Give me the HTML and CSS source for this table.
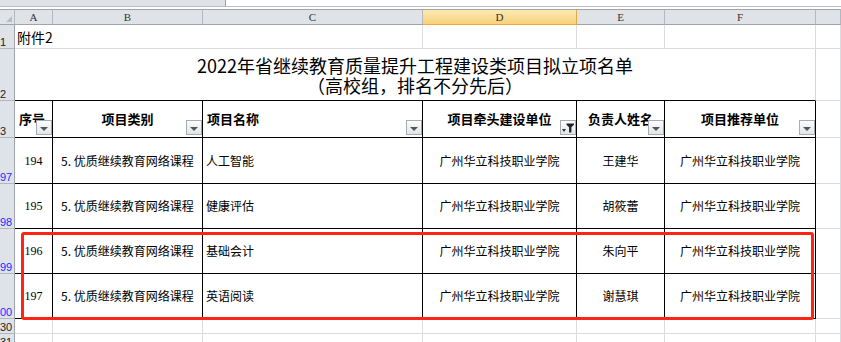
FILE: index.html
```html
<!DOCTYPE html>
<html lang="zh">
<head>
<meta charset="utf-8">
<title>2022年省继续教育质量提升工程建设类项目拟立项名单</title>
<link rel="stylesheet" href="styles.css">
</head>
<body>
<div class="topbar"><div class="namebox"></div><div class="formula"></div></div>
<div class="sheet">
  <div class="grid">
    <!-- column headers -->
    <div class="ch corner"><span class="corner-tri"></span></div>
    <div class="ch">A</div>
    <div class="ch">B</div>
    <div class="ch">C</div>
    <div class="ch active">D</div>
    <div class="ch">E</div>
    <div class="ch">F</div>
    <div class="ch"></div>

    <!-- row 1 -->
    <div class="rh">1</div>
    <div class="c note">附件2</div>
    <div class="c"></div>
    <div class="c"></div>
    <div class="c"></div>
    <div class="c"></div>
    <div class="c"></div>
    <div class="c"></div>

    <!-- row 2 -->
    <div class="rh">2</div>
    <div class="c title"><span class="tl">2022年省继续教育质量提升工程建设类项目拟立项名单</span><span class="tl">（高校组，排名不分先后）</span></div>
    <div class="c"></div>

    <!-- row 3 header -->
    <div class="rh">3</div>
    <div class="t th left">序号<span class="dd"><span class="tri"></span></span></div>
    <div class="t th">项目类别<span class="dd"><span class="tri"></span></span></div>
    <div class="t th left">项目名称<span class="dd"><span class="tri"></span></span></div>
    <div class="t th">项目牵头建设单位<span class="dd"><svg class="filter" width="14" height="13" viewBox="0 0 14 13"><path d="M1 8h4l-2 3z" fill="#333"/><path d="M5.5 2.5h7.5v1.2l-2.6 2.6v5.2h-2.3v-5.2l-2.6-2.6z" fill="#222"/></svg></span></div>
    <div class="t th">负责人姓名<span class="dd"><span class="tri"></span></span></div>
    <div class="t th">项目推荐单位<span class="dd"><span class="tri"></span></span></div>
    <div class="c"></div>

    <!-- data rows -->
    <div class="rh blue">97</div>
    <div class="t num">194</div>
    <div class="t cat">5. 优质继续教育网络课程</div>
    <div class="t name">人工智能</div>
    <div class="t ctr">广州华立科技职业学院</div>
    <div class="t ctr">王建华</div>
    <div class="t ctr">广州华立科技职业学院</div>
    <div class="c"></div>

    <div class="rh blue">98</div>
    <div class="t num">195</div>
    <div class="t cat">5. 优质继续教育网络课程</div>
    <div class="t name">健康评估</div>
    <div class="t ctr">广州华立科技职业学院</div>
    <div class="t ctr">胡筱蕾</div>
    <div class="t ctr">广州华立科技职业学院</div>
    <div class="c"></div>

    <div class="rh blue">99</div>
    <div class="t num">196</div>
    <div class="t cat">5. 优质继续教育网络课程</div>
    <div class="t name">基础会计</div>
    <div class="t ctr">广州华立科技职业学院</div>
    <div class="t ctr">朱向平</div>
    <div class="t ctr">广州华立科技职业学院</div>
    <div class="c"></div>

    <div class="rh blue">00</div>
    <div class="t num">197</div>
    <div class="t cat">5. 优质继续教育网络课程</div>
    <div class="t name">英语阅读</div>
    <div class="t ctr">广州华立科技职业学院</div>
    <div class="t ctr">谢慧琪</div>
    <div class="t ctr">广州华立科技职业学院</div>
    <div class="c"></div>

    <!-- empty rows -->
    <div class="rh">30</div>
    <div class="c"></div><div class="c"></div><div class="c"></div><div class="c"></div><div class="c"></div><div class="c"></div><div class="c"></div>
    <div class="rh">31</div>
    <div class="c"></div><div class="c"></div><div class="c"></div><div class="c"></div><div class="c"></div><div class="c"></div><div class="c"></div>
  </div>
  <div class="highlight"></div>
</div>
</body>
</html>
```

FILE: styles.css
```css
* { box-sizing: border-box; }
html, body {
  margin: 0;
  padding: 0;
  width: 841px;
  height: 342px;
  overflow: hidden;
  background: #ffffff;
  font-family: "Noto Sans CJK SC", "Noto Sans", sans-serif;
  color: #000;
}

.topbar {
  display: flex;
  height: 9px;
}
.namebox {
  width: 226px;
  height: 7px;
  background: #dfe2e7;
  border-right: 1px solid #9aa0a7;
  border-bottom: 1px solid #b9bec4;
}
.formula {
  flex: 1;
  height: 7px;
  background: #fff;
  border-bottom: 1px solid #b9bec4;
}

.sheet {
  position: relative;
}
.grid {
  display: grid;
  grid-template-columns: 15px 38px 150px 220px 154px 88px 151px 25px;
  grid-template-rows: 16px 24px 52px 37px 46px 45px 45px 45px 15px 15px;
}

.grid > div {
  border-right: 1px solid #dadcdd;
  border-bottom: 1px solid #dadcdd;
  font-size: 12px;
  line-height: 14px;
  white-space: nowrap;
  overflow: hidden;
}

/* column headers */
.grid > .ch {
  background: #dfe3e8;
  border-top: 1px solid #9ea4ab;
  border-right: 1px solid #b3b8be;
  border-bottom: 1px solid #9ea4ab;
  font-family: "Liberation Serif", serif;
  font-size: 11px;
  color: #333;
  display: flex;
  align-items: center;
  justify-content: center;
}
.grid > .ch.active {
  background: linear-gradient(#fbe9b0, #f8d27d);
  border-right-color: #e6a93e;
  border-bottom: 1px solid #f0a830;
}
.corner { position: relative; }
.corner-tri {
  position: absolute;
  right: 2px;
  bottom: 2px;
  width: 0;
  height: 0;
  border-left: 6px solid transparent;
  border-bottom: 6px solid #b7bcc2;
}

/* row headers */
.grid > .rh {
  background: #dfe3e8;
  border-right: 1px solid #9ea4ab;
  border-bottom: 1px solid #b3b8be;
  font-family: "Liberation Sans", sans-serif;
  font-size: 11px;
  line-height: 12px;
  color: #222;
  display: flex;
  align-items: flex-end;
}
.grid > .rh.blue { color: #1a2cff; }

/* plain cells */
.grid > .note {
  grid-column: 2 / span 2;
  font-size: 14px;
  line-height: 16px;
  display: flex;
  align-items: center;
  padding-left: 2px;
  overflow: visible;
  border-right: 0;
}
.grid > .c.note + .c { display: none; }
.grid > .title {
  grid-column: 2 / span 6;
  font-size: 18px;
  line-height: 20px;
  display: flex;
  flex-direction: column;
  align-items: center;
  justify-content: center;
  border-bottom: 1px solid #000;
  border-right: 1px solid #d4d4d4;
}
.tl {
  display: block;
  height: 20px;
  line-height: 20px;
}

/* table cells */
.grid > .t {
  border-right: 1px solid #000;
  border-bottom: 1px solid #000;
  display: flex;
  align-items: center;
  font-size: 12px;
}
.grid > .th {
  position: relative;
  justify-content: center;
  font-weight: 700;
  font-size: 13px;
}
.grid > .th.left { justify-content: flex-start; padding-left: 4px; }
.dd {
  position: absolute;
  right: 0;
  bottom: 2px;
  width: 16px;
  height: 15px;
  border: 1px solid #a7acb3;
  background: linear-gradient(#fdfdfe, #e2e5e9);
  display: flex;
  align-items: center;
  justify-content: center;
}
.tri {
  width: 0;
  height: 0;
  border-left: 4px solid transparent;
  border-right: 4px solid transparent;
  border-top: 4px solid #555;
  margin-top: 2px;
}
.filter { display: block; }

.grid > .num {
  justify-content: center;
  font-family: "Liberation Serif", "Noto Sans CJK SC", serif;
  font-size: 12px;
}
.cat { padding-left: 8px; }
.name { padding-left: 3px; }
.ctr { justify-content: center; }

/* red highlight box */
.highlight {
  position: absolute;
  left: 21px;
  top: 223px;
  width: 793px;
  height: 88px;
  border: 3px solid #ff2414;
  border-radius: 3px;
  pointer-events: none;
}
```
